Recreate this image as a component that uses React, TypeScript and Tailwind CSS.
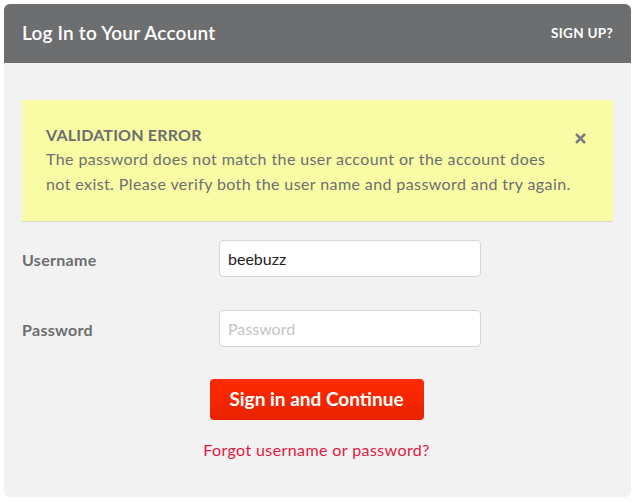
// Login card with validation error banner
import { X } from "lucide-react";

export default function App() {
  return (
    <div className="w-[635px] h-[504px] bg-white p-1 font-['Lato',sans-serif]">
      <div className="w-[627px] h-[493px] rounded-md overflow-hidden bg-[#f2f2f2] flex flex-col">
        {/* Header */}
        <div className="h-[59px] bg-[#6d6e70] flex items-center justify-between pl-[18px] pr-[18px] pb-[1px]">
          <h1 className="text-white text-[19px] font-semibold tracking-[0.2px]">Log In to Your Account</h1>
          <a className="text-white text-[13.5px] font-bold tracking-[0.3px]">SIGN UP?</a>
        </div>

        {/* Error banner */}
        <div className="mt-[37px] mx-[18px] bg-[#f9fca5] border-b border-[#d9d9cf] h-[122px] pl-6 pr-6 pt-[25px] flex justify-between">
          <div>
            <p className="text-[#6d6e70] text-[16px] font-bold leading-[20px] tracking-[0.2px]">VALIDATION ERROR</p>
            <p className="text-[#6d6e70] text-[16px] leading-[25px] mt-[1px] tracking-[0.4px]">
              The password does not match the user account or the account does
              <br />
              not exist. Please verify both the user name and password and try again.
            </p>
          </div>
          <X className="w-[15px] h-[15px] text-[#7a7b7d] mt-[6px] mr-[1px]" strokeWidth={4} />
        </div>

        {/* Form */}
        <div className="mt-[18px] px-[18px] flex flex-col gap-[33px]">
          <div className="flex items-center">
            <label className="w-[197px] text-[16px] font-bold text-[#6d6e70] pt-[2px] tracking-[0.3px]">Username</label>
            <input
              defaultValue="beebuzz"
              className="w-[262px] h-[37px] rounded border border-[#d6d6d6] bg-white px-2 text-[16px] text-[#222] outline-none"
            />
          </div>
          <div className="flex items-center">
            <label className="w-[197px] text-[16px] font-bold text-[#6d6e70] pt-[3px] tracking-[0.3px]">Password</label>
            <input
              type="password"
              placeholder="Password"
              className="w-[262px] h-[37px] rounded border border-[#d6d6d6] bg-white px-2 text-[16px] text-[#222] placeholder:text-[#c4c4c4] outline-none"
            />
          </div>
        </div>

        <div className="flex flex-col items-center mt-[32px] pr-[2px]">
          <button className="w-[214px] h-[41px] rounded bg-gradient-to-b from-[#ff2a00] to-[#e92300] text-white text-[19px] font-bold">
            Sign in and Continue
          </button>
          <a className="mt-[18px] text-[16px] text-[#e5173f] tracking-[0.4px]">Forgot username or password?</a>
        </div>
      </div>
    </div>
  );
}
